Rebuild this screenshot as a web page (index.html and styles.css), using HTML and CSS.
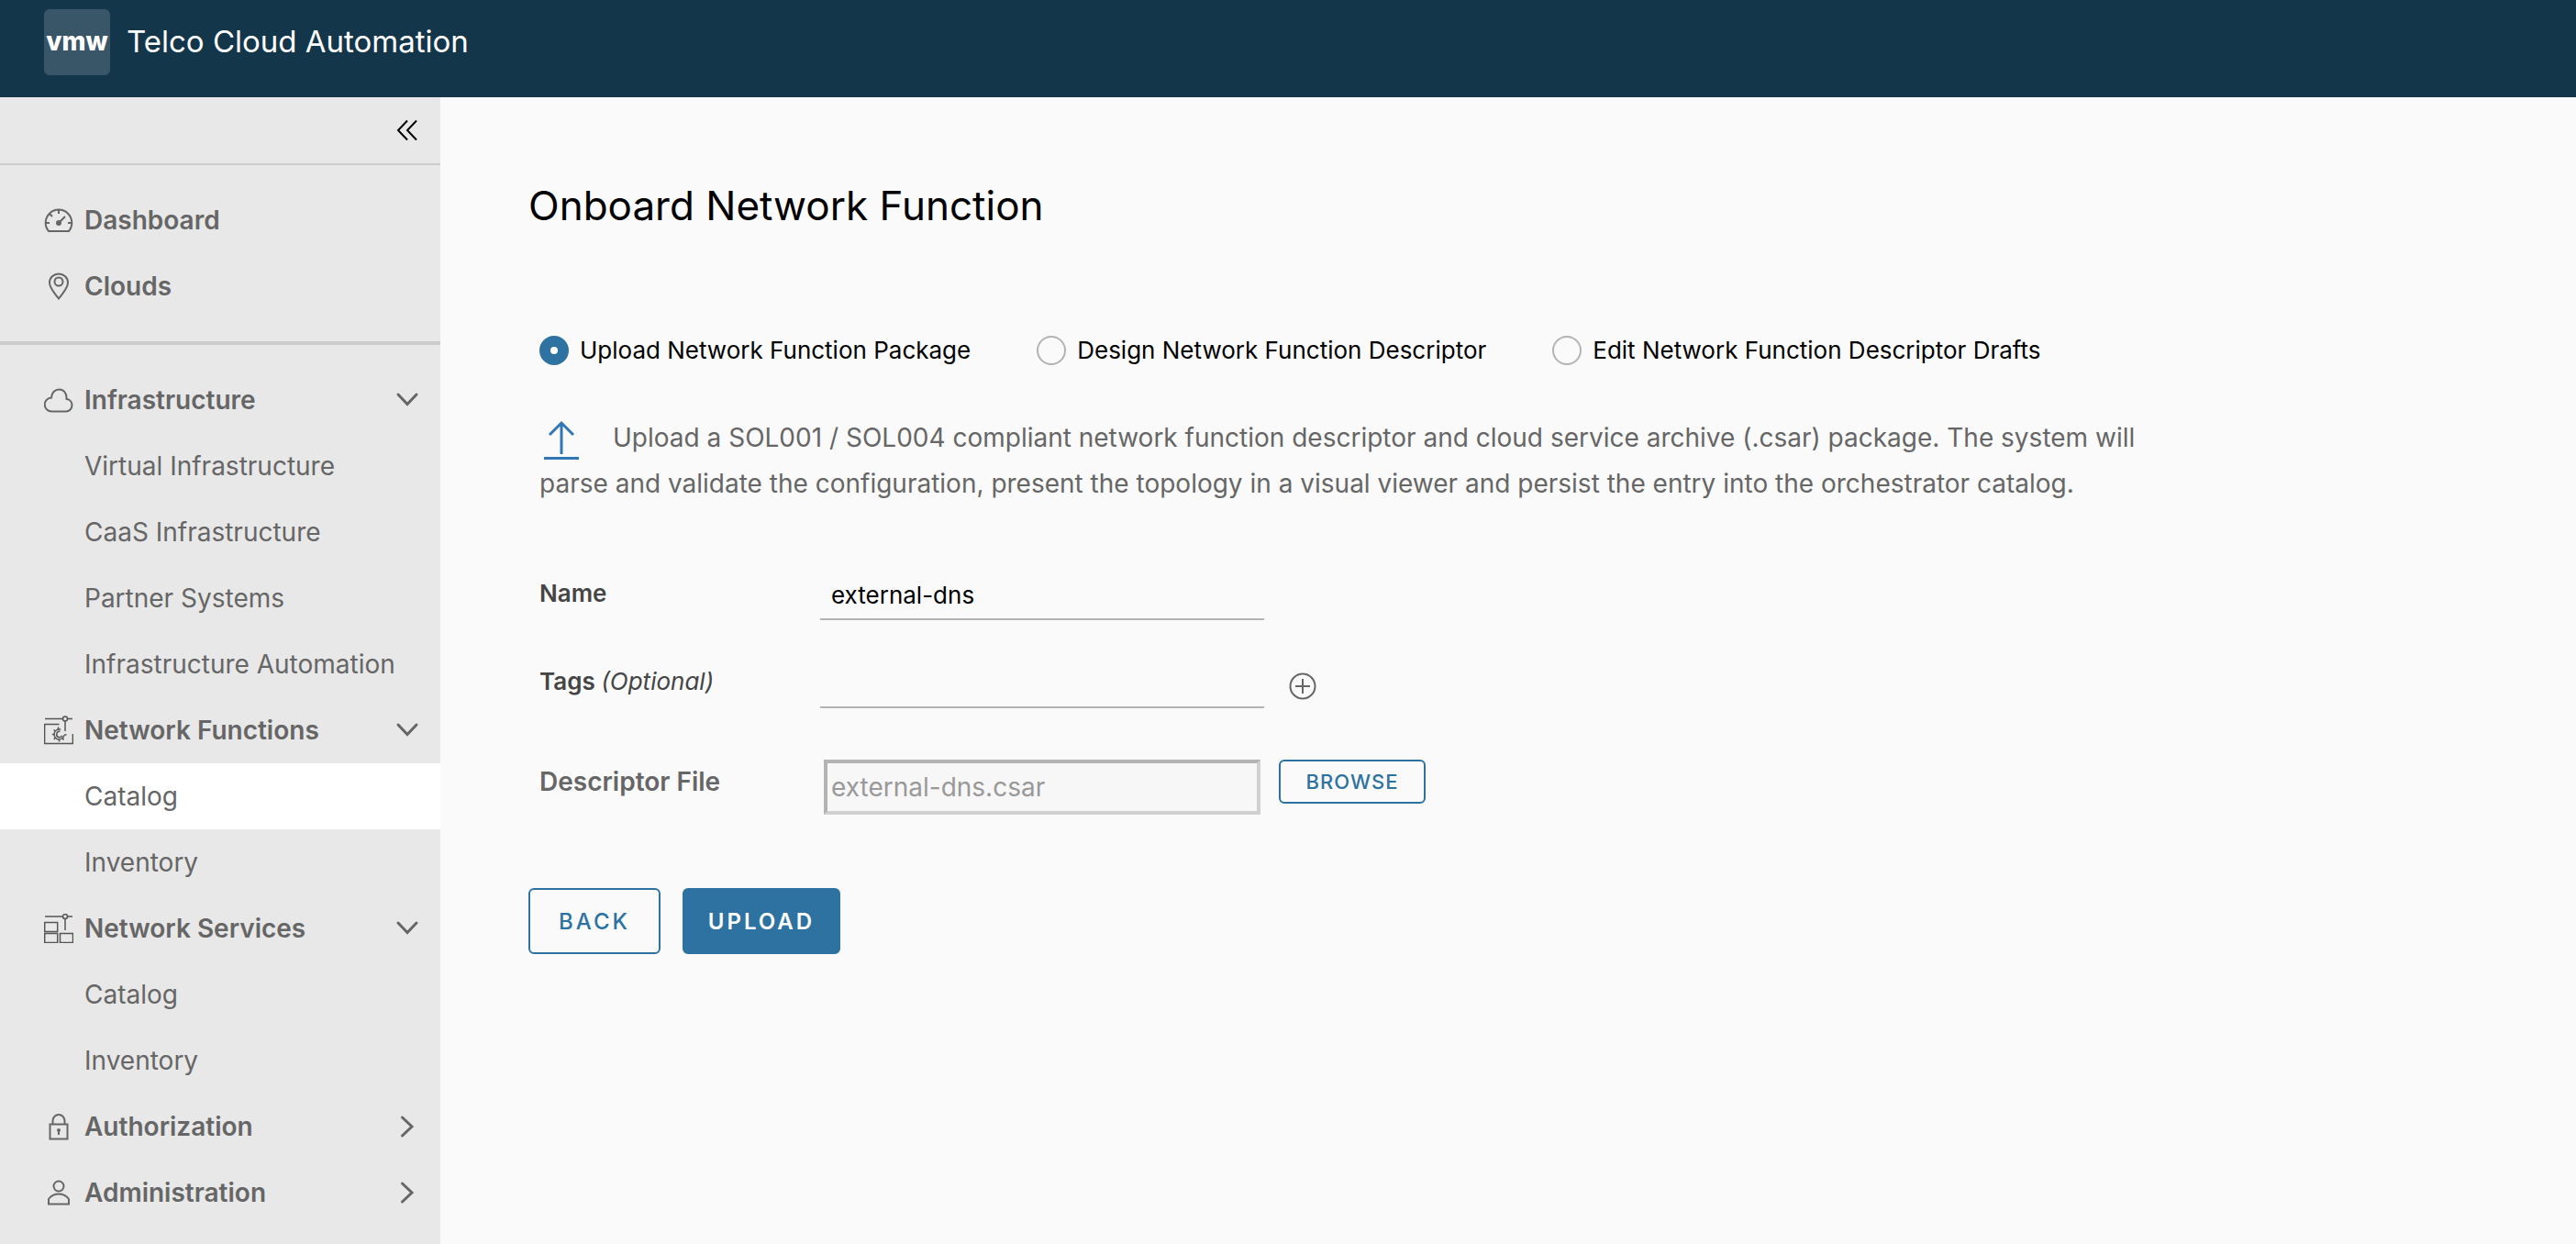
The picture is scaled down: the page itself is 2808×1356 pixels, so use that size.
FILE: index.html
```html
<!DOCTYPE html>
<html lang="en">
<head>
<meta charset="utf-8">
<title>Telco Cloud Automation</title>
<link rel="stylesheet" href="styles.css">
</head>
<body>
<header class="header">
  <span class="logo">vmw</span>
  <span class="product">Telco Cloud Automation</span>
</header>
<div class="shell">
  <nav class="sidebar">
    <div class="collapse-row">
      <button class="collapse" type="button" aria-label="Collapse menu">
        <svg class="icon" viewBox="0 0 32 32"><path d="M16 5.500 6 16l10 10.500M26 5.500 16 16l10 10.500"/></svg>
      </button>
    </div>
    <div class="nav-top">
      <a class="nav-main" href="#">
        <svg class="icon" viewBox="0 0 32 32"><path d="M5 28a14.300 14.300 0 1 1 22 0zM16 5v4M2 19h4M26 19h4M6.500 9.500l2.500 2.500M17 18l6-6"/><circle class="solid" cx="16" cy="19" r="2"/></svg>
        <span>Dashboard</span>
      </a>
      <a class="nav-main" href="#">
        <svg class="icon" viewBox="0 0 32 32"><path d="M16 29.500C11 23 6 18 6 12a10 9.500 0 0 1 20 0c0 6-5 11-10 17.500z"/><circle cx="16" cy="11" r="4.500"/></svg>
        <span>Clouds</span>
      </a>
    </div>
    <div class="nav-groups">
      <button class="nav-main" type="button" aria-expanded="true">
        <svg class="icon" viewBox="0 0 32 32"><path d="M8.500 28.500a7.500 7.500 0 0 1-.500-15C8 8 12 4.500 16.500 4.500s8.500 3.500 8 10.500c4 .500 6 3.500 6 6.500 0 4-3 7-6.500 7z"/></svg>
        <span>Infrastructure</span>
        <svg class="caret" viewBox="0 0 32 32"><path d="m6 10 10 10.500L26 10"/></svg>
      </button>
      <a class="nav-sub" href="#">Virtual Infrastructure</a>
      <a class="nav-sub" href="#">CaaS Infrastructure</a>
      <a class="nav-sub" href="#">Partner Systems</a>
      <a class="nav-sub" href="#">Infrastructure Automation</a>
      <button class="nav-main" type="button" aria-expanded="true">
        <svg class="icon thin" viewBox="0 0 32 32"><path d="M1 3.500h19.500M25.500 3.500H31M16.500 9.500H.600v21h30.800V20M23 6v11"/><circle cx="23" cy="3.500" r="2.500"/><circle cx="16.500" cy="20.500" r="5.500" stroke-dasharray="26 9" transform="rotate(10 16.500 20.500)"/><path d="M17.500 17.300a3.200 3.200 0 1 0 2.300 4.500M15.500 15v-2.500M12.500 17l-2-1.500M11.200 20.500H8.800M12.500 24l-1.700 2M16.500 26v2.500M20 24.500l1.500 2M22 21h2.500"/></svg>
        <span>Network Functions</span>
        <svg class="caret" viewBox="0 0 32 32"><path d="m6 10 10 10.500L26 10"/></svg>
      </button>
      <a class="nav-sub current" href="#" aria-current="page">Catalog</a>
      <a class="nav-sub" href="#">Inventory</a>
      <button class="nav-main" type="button" aria-expanded="true">
        <svg class="icon thin" viewBox="0 0 32 32"><path d="M1 3h19.500M25.500 3H31M23 5.500V18M.700 9.500h14v10h-14zM.700 21.500h14v10h-14zM17.500 21.500h14v10h-14z"/><circle cx="23" cy="3" r="2.500"/></svg>
        <span>Network Services</span>
        <svg class="caret" viewBox="0 0 32 32"><path d="m6 10 10 10.500L26 10"/></svg>
      </button>
      <a class="nav-sub" href="#">Catalog</a>
      <a class="nav-sub" href="#">Inventory</a>
      <button class="nav-main" type="button" aria-expanded="false">
        <svg class="icon" viewBox="0 0 32 32"><path d="M6.500 13.500h19v16h-19zM9.500 13.500V10a6.500 7 0 0 1 13 0v3.500M16 21v4"/><circle class="solid" cx="16" cy="20" r="1"/></svg>
        <span>Authorization</span>
        <svg class="caret" viewBox="0 0 32 32"><path d="m10.500 6 10.500 10-10.500 10"/></svg>
      </button>
      <button class="nav-main" type="button" aria-expanded="false">
        <svg class="icon" viewBox="0 0 32 32"><circle cx="16" cy="9" r="5.500"/><path d="M5 28.500V23c3-4 7-5.500 11-5.500S24 19 27 23v5.500z"/></svg>
        <span>Administration</span>
        <svg class="caret" viewBox="0 0 32 32"><path d="m10.500 6 10.500 10-10.500 10"/></svg>
      </button>
    </div>
  </nav>
  <main class="content">
    <h1 class="title">Onboard Network Function</h1>
    <form class="form">
      <div class="modes">
        <label class="mode"><input class="radio" type="radio" name="mode" checked><span>Upload Network Function Package</span></label>
        <label class="mode"><input class="radio" type="radio" name="mode"><span>Design Network Function Descriptor</span></label>
        <label class="mode"><input class="radio" type="radio" name="mode"><span>Edit Network Function Descriptor Drafts</span></label>
      </div>
      <p class="intro"><svg class="upload-icon" viewBox="0 0 48 48"><path d="M24 6v34M11 19 24 6l13 13M5 44.500h38"/></svg>Upload a SOL001 / SOL004 compliant network function descriptor and cloud service archive (.csar) package. The system will<br>parse and validate the configuration, present the topology in a visual viewer and persist the entry into the orchestrator catalog.</p>
      <div class="field">
        <label class="label" for="name">Name</label>
        <input class="line-input" id="name" type="text" value="external-dns">
      </div>
      <div class="field">
        <label class="label" for="tags">Tags <em class="optional">(Optional)</em></label>
        <input class="line-input" id="tags" type="text">
        <button class="add" type="button" aria-label="Add tag">
          <svg class="icon" viewBox="0 0 32 32"><circle cx="16" cy="16" r="13.500"/><path d="M16 8v16M8 16h16"/></svg>
        </button>
      </div>
      <div class="field file-field">
        <label class="label file-label" for="file">Descriptor File</label>
        <input class="file-input" id="file" type="text" value="external-dns.csar" disabled>
        <button class="button small" type="button">BROWSE</button>
      </div>
    </form>
    <div class="actions">
      <button class="button" type="button">BACK</button>
      <button class="button primary" type="button">UPLOAD</button>
    </div>
  </main>
</div>
</body>
</html>
```
FILE: styles.css
```css
* { box-sizing: border-box; }

body {
  margin: 0;
  min-height: 100vh;
  display: flex;
  flex-direction: column;
  background: #fafafa;
  color: #000;
  font-family: Inter, "Liberation Sans", sans-serif;
  font-size: 26px;
}

button, input { font: inherit; color: inherit; }
button { cursor: pointer; }
svg { fill: none; stroke: currentColor; }

.header {
  display: flex;
  align-items: flex-start;
  gap: 18px;
  height: 106px;
  padding: 10px 48px;
  background: #13364b;
  color: #fff;
}
.logo {
  width: 72px;
  height: 72px;
  border-radius: 6px;
  background: #395668;
  font-size: 28px;
  font-weight: 800;
  line-height: 70px;
  text-align: center;
}
.product { font-size: 33px; line-height: 70px; }

.shell { flex: 1; display: flex; }

.sidebar {
  flex: none;
  width: 480px;
  background: #e8e8e8;
  color: #666;
}
.collapse-row {
  display: flex;
  justify-content: flex-end;
  align-items: center;
  height: 74px;
  padding: 0 20px;
  border-bottom: 2px solid #ccc;
}
.collapse { display: flex; padding: 0; border: 0; background: none; color: #000; }
.nav-top { padding: 24px 0; border-bottom: 4px solid #ccc; }
.nav-groups { padding: 24px 0 20px; }
.nav-main, .nav-sub {
  display: flex;
  align-items: center;
  width: 100%;
  height: 72px;
  border: 0;
  background: none;
  color: #666;
  font-size: 28px;
  text-decoration: none;
}
.nav-main { gap: 12px; padding: 0 20px 0 48px; font-weight: 600; }
.nav-sub { padding: 0 20px 0 92px; }
.current { background: #fff; }
.icon { flex: none; width: 32px; height: 32px; stroke-width: 2; }
.thin { stroke-width: 1.500; color: #555; }
.solid { fill: currentColor; }
.caret { width: 32px; height: 32px; margin-left: auto; stroke-width: 3; stroke-linecap: round; }

.content { flex: 1; padding: 90px 96px; }
.title { margin: 0; font-size: 44px; font-weight: 400; line-height: 56px; }
.form { padding: 98px 12px 0; }
.modes { display: flex; gap: 72px; }
.mode { display: flex; align-items: center; gap: 12px; height: 64px; white-space: nowrap; }
.mode span { padding-bottom: 2px; }
.radio {
  appearance: none;
  width: 32px;
  height: 32px;
  margin: 0;
  border: 2px solid #b3b3b3;
  border-radius: 50%;
}
.radio:checked { border: 12px solid #2d72a0; background: #fff; }

.intro { margin: 38px 0 64px; color: #666; font-size: 28px; line-height: 50px; }
.upload-icon {
  width: 48px;
  height: 48px;
  margin: -4px 32px -4px 0;
  vertical-align: middle;
  stroke: #3277b5;
  stroke-width: 3;
}

.field { display: flex; align-items: flex-start; height: 96px; }
.label { width: 306px; padding-top: 11px; color: #454545; font-weight: 600; line-height: 40px; }
.optional { font-weight: 400; }
.line-input {
  width: 484px;
  height: 60px;
  padding: 6px 12px 0;
  border: 0;
  border-bottom: 2px solid #b3b3b3;
  background: none;
}
.add { display: flex; margin: 20px 26px; padding: 0; border: 0; background: none; color: #666; }
.file-field { height: 60px; margin-top: 20px; }
.file-label { padding-top: 4px; color: #666; font-size: 28px; }
.file-input {
  width: 476px;
  height: 60px;
  margin: 0 20px 0 4px;
  padding: 0 4px;
  border: 4px solid;
  border-color: #b3b3b3 #d0d0d0 #d0d0d0 #b3b3b3;
  background: #f7f7f7;
  color: #999;
  font-size: 28px;
}

.actions { display: flex; gap: 24px; padding-top: 80px; }
.button {
  min-width: 144px;
  height: 72px;
  padding: 0 24px;
  border: 2px solid #2d72a0;
  border-radius: 6px;
  background: none;
  color: #2d72a0;
  font-size: 24px;
  font-weight: 500;
  letter-spacing: 3px;
}
.small { min-width: 160px; height: 48px; font-size: 22px; letter-spacing: 1px; }
.primary { min-width: 172px; background: #2d72a0; color: #fff; font-weight: 600; }
```
